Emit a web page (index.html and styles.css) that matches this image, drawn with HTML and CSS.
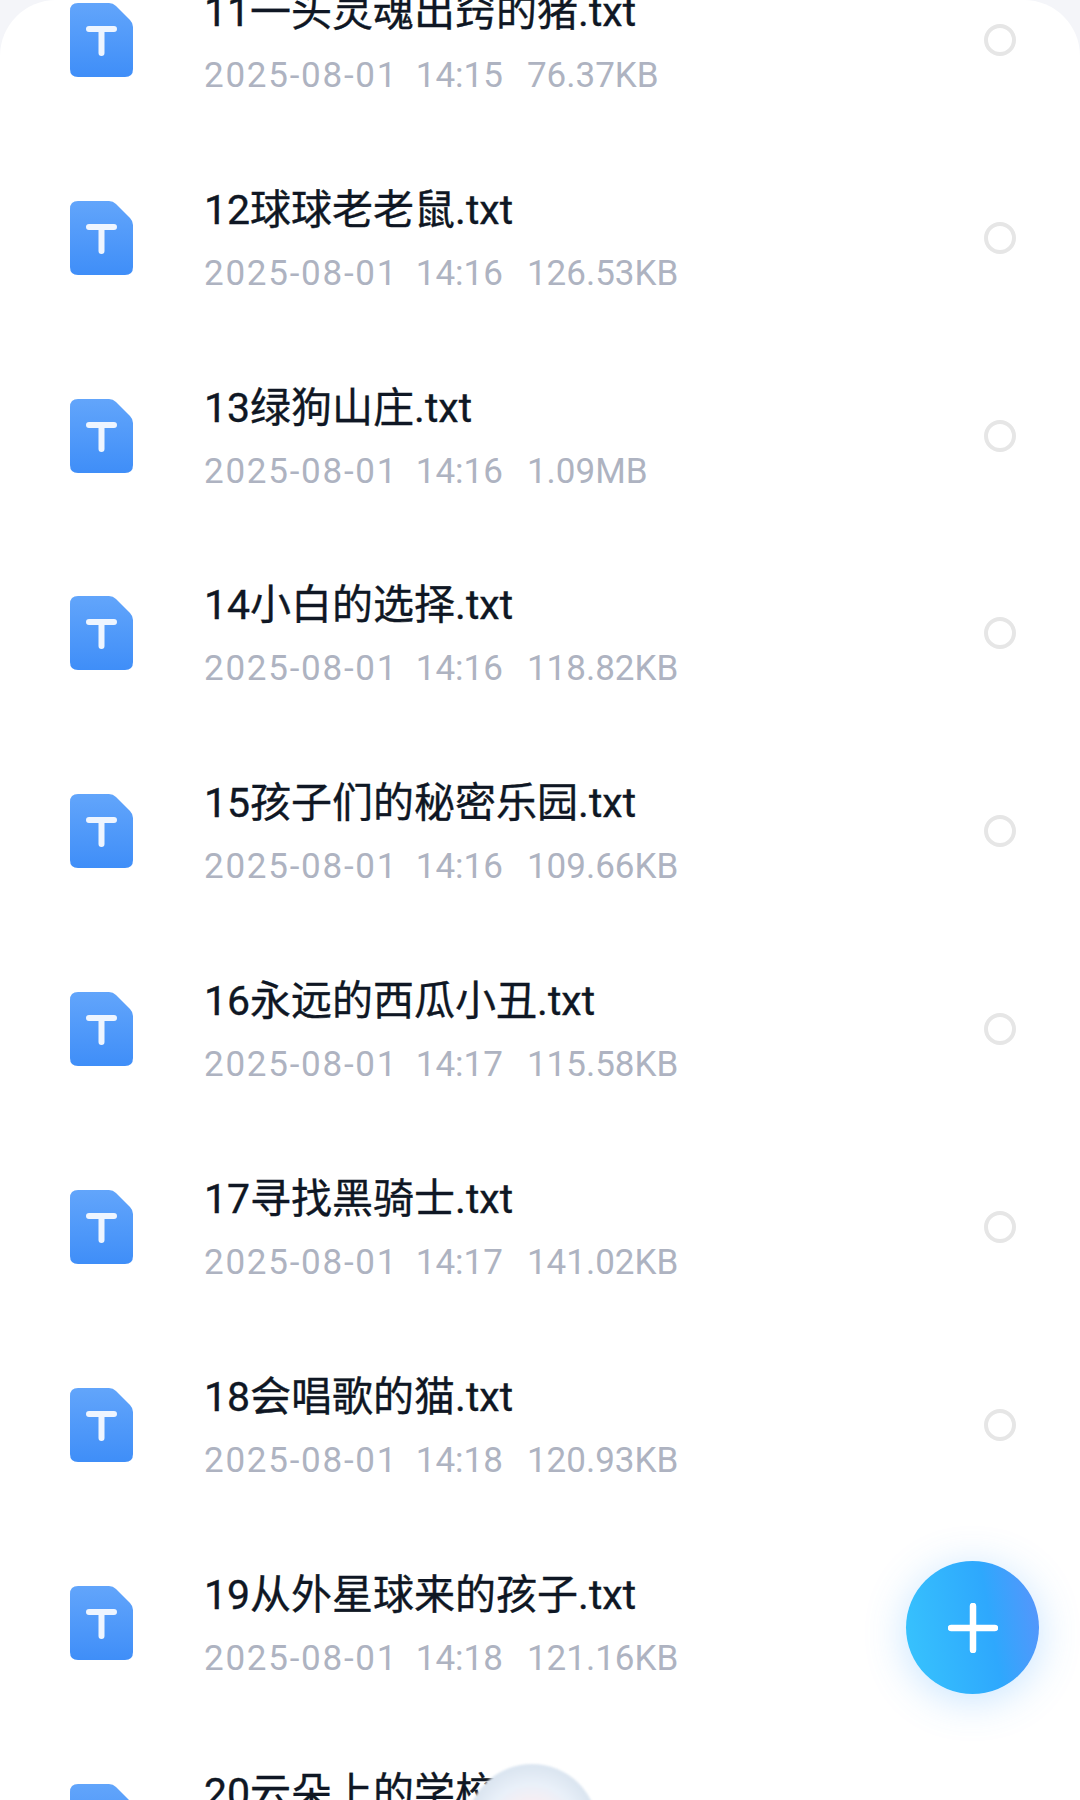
FILE: index.html
```html
<!DOCTYPE html>
<html lang="zh-CN">
<head>
    <meta charset="UTF-8">
    <title>文件列表</title>
    <link rel="stylesheet" href="styles.css">
</head>
<body>
    <svg class="defs" width="0" height="0">
        <defs>
            <linearGradient id="fileFill" x1="0" y1="0" x2="0" y2="1">
                <stop offset="0" stop-color="#62a5fb"/>
                <stop offset="1" stop-color="#3f8ef8"/>
            </linearGradient>
            <symbol id="fileIcon" viewBox="0 0 63 74">
                <path d="M8 0H39Q43 0 46 3L60 17Q63 20 63 24V66Q63 74 55 74H8Q0 74 0 66V8Q0 0 8 0Z" fill="url(#fileFill)"/>
                <path d="M19 26H44M31.500 26V50" fill="none" stroke="#eef5ff" stroke-width="6" stroke-linecap="round"/>
            </symbol>
        </defs>
    </svg>

    <div class="sheet">
        <ul class="file-list">
            <li class="file-row">
                <svg class="file-icon"><use href="#fileIcon"/></svg>
                <div class="file-info">
                    <div class="file-name">11一头灵魂出窍的猪.txt</div>
                    <div class="file-meta"><span class="file-date">2025-08-01</span><span>14:15</span><span>76.37KB</span></div>
                </div>
                <span class="radio"></span>
            </li>
            <li class="file-row">
                <svg class="file-icon"><use href="#fileIcon"/></svg>
                <div class="file-info">
                    <div class="file-name">12球球老老鼠.txt</div>
                    <div class="file-meta"><span class="file-date">2025-08-01</span><span>14:16</span><span>126.53KB</span></div>
                </div>
                <span class="radio"></span>
            </li>
            <li class="file-row">
                <svg class="file-icon"><use href="#fileIcon"/></svg>
                <div class="file-info">
                    <div class="file-name">13绿狗山庄.txt</div>
                    <div class="file-meta"><span class="file-date">2025-08-01</span><span>14:16</span><span>1.09MB</span></div>
                </div>
                <span class="radio"></span>
            </li>
            <li class="file-row">
                <svg class="file-icon"><use href="#fileIcon"/></svg>
                <div class="file-info">
                    <div class="file-name">14小白的选择.txt</div>
                    <div class="file-meta"><span class="file-date">2025-08-01</span><span>14:16</span><span>118.82KB</span></div>
                </div>
                <span class="radio"></span>
            </li>
            <li class="file-row">
                <svg class="file-icon"><use href="#fileIcon"/></svg>
                <div class="file-info">
                    <div class="file-name">15孩子们的秘密乐园.txt</div>
                    <div class="file-meta"><span class="file-date">2025-08-01</span><span>14:16</span><span>109.66KB</span></div>
                </div>
                <span class="radio"></span>
            </li>
            <li class="file-row">
                <svg class="file-icon"><use href="#fileIcon"/></svg>
                <div class="file-info">
                    <div class="file-name">16永远的西瓜小丑.txt</div>
                    <div class="file-meta"><span class="file-date">2025-08-01</span><span>14:17</span><span>115.58KB</span></div>
                </div>
                <span class="radio"></span>
            </li>
            <li class="file-row">
                <svg class="file-icon"><use href="#fileIcon"/></svg>
                <div class="file-info">
                    <div class="file-name">17寻找黑骑士.txt</div>
                    <div class="file-meta"><span class="file-date">2025-08-01</span><span>14:17</span><span>141.02KB</span></div>
                </div>
                <span class="radio"></span>
            </li>
            <li class="file-row">
                <svg class="file-icon"><use href="#fileIcon"/></svg>
                <div class="file-info">
                    <div class="file-name">18会唱歌的猫.txt</div>
                    <div class="file-meta"><span class="file-date">2025-08-01</span><span>14:18</span><span>120.93KB</span></div>
                </div>
                <span class="radio"></span>
            </li>
            <li class="file-row">
                <svg class="file-icon"><use href="#fileIcon"/></svg>
                <div class="file-info">
                    <div class="file-name">19从外星球来的孩子.txt</div>
                    <div class="file-meta"><span class="file-date">2025-08-01</span><span>14:18</span><span>121.16KB</span></div>
                </div>
                <span class="radio"></span>
            </li>
            <li class="file-row">
                <svg class="file-icon"><use href="#fileIcon"/></svg>
                <div class="file-info">
                    <div class="file-name">20云朵上的学校.txt</div>
                    <div class="file-meta"><span class="file-date">2025-08-01</span><span>14:19</span><span>98.40KB</span></div>
                </div>
                <span class="radio"></span>
            </li>
        </ul>
    </div>

    <div class="blob"></div>

    <button class="fab">
        <svg viewBox="0 0 50 50" width="50" height="50">
            <path d="M25 3V47M3 25H47" fill="none" stroke="#fff" stroke-width="6.500" stroke-linecap="round"/>
        </svg>
    </button>
</body>
</html>
```

FILE: styles.css
```css
html, body {
    margin: 0;
    height: 1800px;
    overflow: hidden;
    background-color: #f4f5f9;
    font-family: Roboto, "Noto Sans CJK SC", sans-serif;
}
.defs {
    display: block;
}
.sheet {
    height: 1800px;
    background-color: #fff;
    border-radius: 56px 56px 0 0;
    overflow: hidden;
}
.file-list {
    list-style: none;
    margin: -59px 0 0;
    padding: 0;
}
.file-row {
    display: flex;
    align-items: center;
    height: 197.85px;
    padding: 0 64px 0 70px;
}
.file-icon {
    width: 63px;
    height: 74px;
    flex: none;
}
.file-info {
    flex: 1;
    margin-left: 71px;
    padding-top: 5px;
}
.file-name {
    font-size: 41px;
    line-height: 52px;
    color: #0f1724;
    -webkit-text-stroke: 0.35px #0f1724;
}
.file-meta {
    display: flex;
    gap: 24px;
    margin-top: 15px;
    font-size: 35px;
    line-height: 46px;
    color: #aeb3c1;
}
.file-date {
    margin-right: -6.5px;
    letter-spacing: 1.75px;
}
.radio {
    box-sizing: border-box;
    width: 32px;
    height: 32px;
    flex: none;
    border: 4.5px solid #e6e6e6;
    border-radius: 50%;
}
.blob {
    position: absolute;
    left: 466px;
    top: 1764px;
    width: 132px;
    height: 132px;
    border-radius: 50%;
    background: radial-gradient(circle 66px at 50% 50%, #f8eef2 40%, #e9f0f9 70%, #dce6f1 95%);
    filter: blur(1px);
}
.fab {
    position: absolute;
    left: 906px;
    top: 1561px;
    width: 133px;
    height: 133px;
    padding: 0;
    border: none;
    border-radius: 50%;
    display: flex;
    align-items: center;
    justify-content: center;
    background: linear-gradient(80deg, #38c4fd 0%, #2ea8fd 62%, #5b93fb 100%);
    box-shadow: 0 6px 42px rgba(70, 165, 255, 0.3);
}
```
